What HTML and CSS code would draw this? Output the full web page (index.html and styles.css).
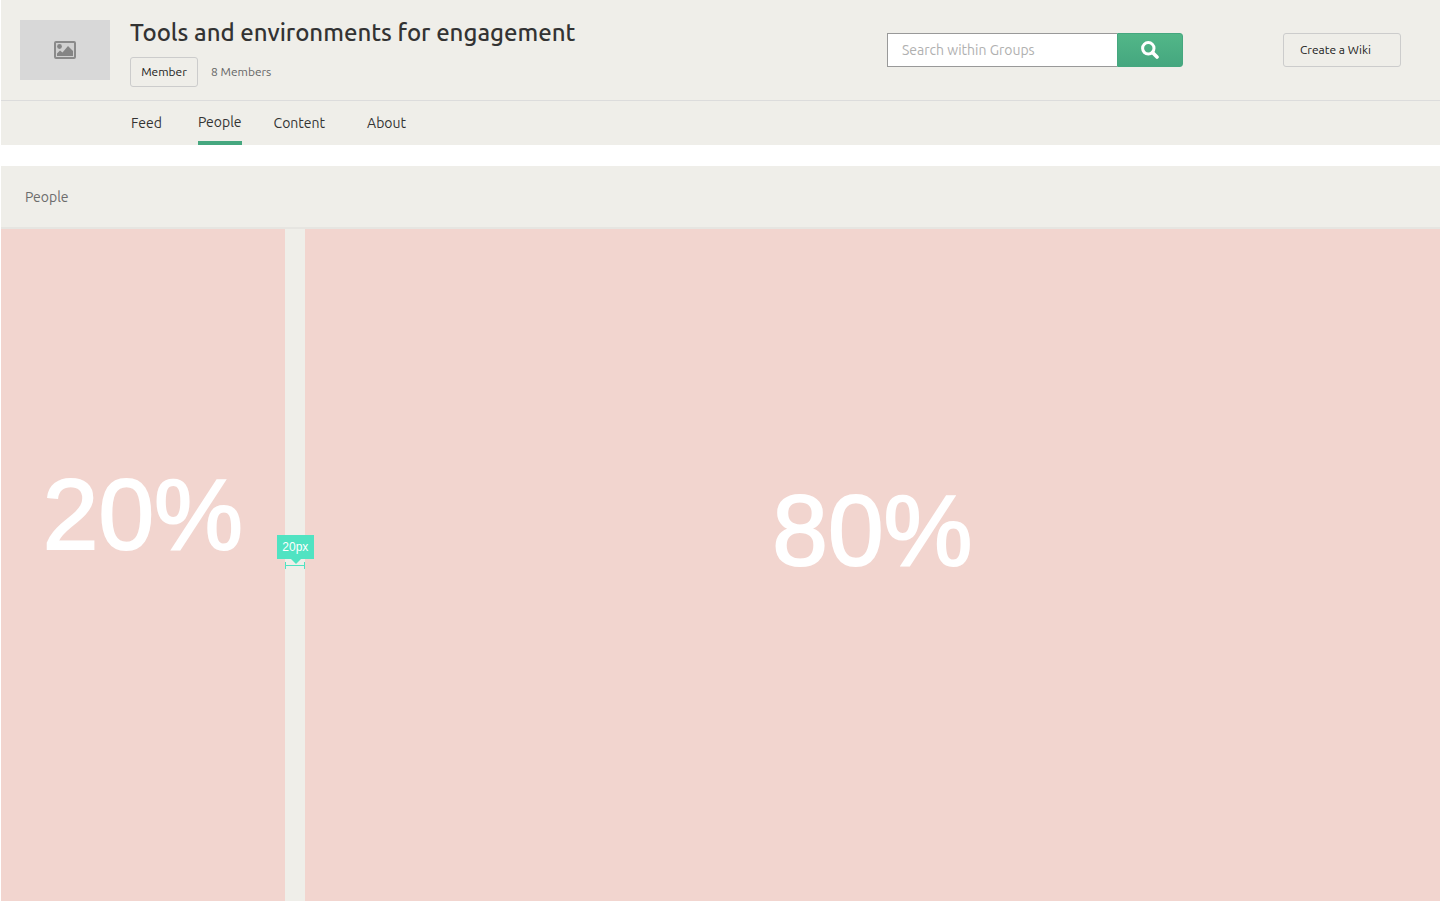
FILE: index.html
```html
<!DOCTYPE html>
<html lang="en">
<head>
<meta charset="utf-8">
<title>Tools and environments for engagement</title>
<link rel="stylesheet" href="styles.css">
</head>
<body>
<div class="page">
  <header class="group">
    <div class="group-top">
      <div class="thumb">
        <svg width="22" height="18" viewBox="0 0 22 18" aria-hidden="true">
          <rect x="1" y="1" width="20" height="16" rx="1" fill="#d0d0d0" stroke="#8a8a8a" stroke-width="2"/>
          <circle cx="5.500" cy="5.500" r="2.400" fill="#858585"/>
          <path d="M3 15v-2.500l3-3 2.500 2L14 5l5 5v5z" fill="#858585"/>
        </svg>
      </div>
      <div class="group-info">
        <h1 class="title">Tools and environments for engagement</h1>
        <div class="meta">
          <button class="btn member" type="button">Member</button>
          <span class="count">8 Members</span>
        </div>
      </div>
      <form class="search" role="search">
        <input class="search-input" type="text" placeholder="Search within Groups" aria-label="Search within Groups">
        <button class="search-btn" type="button" aria-label="Search">
          <svg width="18" height="18" viewBox="0 0 18 18" aria-hidden="true">
            <circle cx="7.300" cy="7.300" r="5.700" fill="none" stroke="#fff" stroke-width="3"/>
            <path d="M11.500 11.500L16 16" stroke="#fff" stroke-width="3.600" stroke-linecap="round"/>
          </svg>
        </button>
      </form>
      <button class="btn create" type="button">Create a Wiki</button>
    </div>
    <nav class="tabs">
      <a class="tab" href="#feed">Feed</a>
      <a class="tab active" href="#people" aria-current="page">People</a>
      <a class="tab" href="#content">Content</a>
      <a class="tab last" href="#about">About</a>
    </nav>
  </header>
  <main class="panel">
    <h2 class="panel-title">People</h2>
    <div class="columns">
      <section class="column narrow">20%</section>
      <div class="gutter">
        <div class="measure">
          <span class="measure-label">20px</span>
          <svg class="measure-line" width="20" height="7" viewBox="0 0 20 7" aria-hidden="true">
            <path d="M0 0h1v3h18v-3h1v7h-1v-3h-18v3h-1z" fill="#50e3c2" shape-rendering="crispEdges"/>
          </svg>
        </div>
      </div>
      <section class="column wide">80%</section>
    </div>
  </main>
</div>
</body>
</html>
```

FILE: styles.css
```css
* {
  box-sizing: border-box;
}

body {
  margin: 0;
  background: #fff;
  color: #333;
  font-family: Ubuntu, "Noto Sans", sans-serif;
  font-size: 14px;
}

.page {
  display: flex;
  flex-direction: column;
  gap: 21px;
  min-height: 100vh;
  padding-left: 1px;
}

.group,
.panel {
  background: #efeee9;
}

.group-top {
  display: flex;
  align-items: flex-start;
  padding: 20px 39px 13px 19px;
  border-bottom: 1px solid #dcdcdc;
}

.thumb {
  display: flex;
  align-items: center;
  justify-content: center;
  width: 90px;
  height: 60px;
  margin-right: 20px;
  background: #d8d8d8;
}

.group-info {
  flex: 1;
}

.title {
  margin: 0 0 12px;
  font-size: 24px;
  font-weight: 500;
  line-height: 25px;
}

.meta {
  display: flex;
  align-items: center;
  gap: 13px;
}

.btn {
  padding: 0 0 2px;
  border: 1px solid #ccc;
  border-radius: 3px;
  background: transparent;
  color: #222;
  font: 12px Ubuntu, "Noto Sans", sans-serif;
}

.member {
  height: 30px;
  width: 68px;
}

.count {
  padding-bottom: 2px;
  color: #666;
  font-size: 12px;
}

.search {
  display: flex;
  height: 34px;
  margin: 13px 100px 0 0;
}

.search-input {
  width: 230px;
  padding: 0 14px;
  border: 1px solid #999;
  border-right: 0;
  border-radius: 0;
  background: #fff;
  font: 14px Ubuntu, "Noto Sans", sans-serif;
}

.search-input::placeholder {
  color: #b0b0b0;
}

.search-btn {
  display: flex;
  align-items: center;
  justify-content: center;
  width: 66px;
  padding: 0;
  border: 1px solid #45a77f;
  border-radius: 0 3px 3px 0;
  background: linear-gradient(#52b788, #45a77f);
}

.create {
  width: 118px;
  height: 34px;
  margin-top: 13px;
  padding-left: 16px;
  text-align: left;
}

.tabs {
  display: flex;
  gap: 32px;
  padding-left: 130px;
}

.tab {
  height: 44px;
  color: #333;
  line-height: 44px;
  text-decoration: none;
}

.active {
  margin-left: 4px;
  border-bottom: 4px solid #45a77f;
  line-height: 42px;
}

.last {
  margin-left: 10px;
}

.panel {
  display: flex;
  flex: 1;
  flex-direction: column;
}

.panel-title {
  margin: 0;
  padding: 2px 24px 0;
  border-bottom: 2px solid #e6e5e1;
  color: #6c6c6c;
  font-size: 14px;
  font-weight: 400;
  line-height: 59px;
}

.columns {
  display: grid;
  flex: 1;
  grid-template-columns: 1fr 20px 4fr;
}

.column {
  background: #f2d5cf;
  color: #fff;
  font-family: "Helvetica Neue", "Liberation Sans", sans-serif;
  font-size: 100px;
  line-height: 100px;
  text-align: center;
  -webkit-text-stroke: 2px #fff;
}

.narrow {
  padding-top: 235px;
}

.wide {
  padding-top: 251px;
}

.gutter {
  position: relative;
}

.measure {
  position: absolute;
  top: 306px;
  left: -8px;
  display: flex;
  flex-direction: column;
  align-items: center;
  gap: 3px;
}

.measure-label {
  position: relative;
  width: 37px;
  background: #50e3c2;
  color: #fff;
  font: 12px/24px "Helvetica Neue", "Liberation Sans", sans-serif;
  text-align: center;
}

.measure-label::after {
  position: absolute;
  top: 100%;
  left: 14px;
  border: 5px solid transparent;
  border-top-color: #50e3c2;
  border-bottom: 0;
  content: "";
}
```
